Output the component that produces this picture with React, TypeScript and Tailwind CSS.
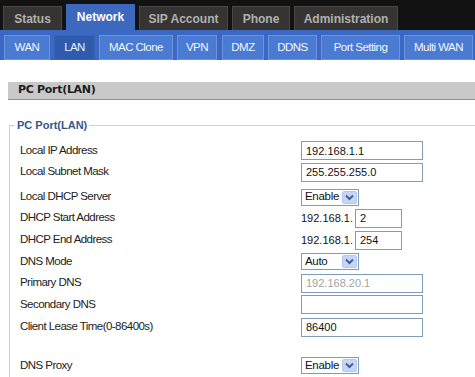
import React from 'react';

const mainTabs = [
  { label: 'Status', ml: 'ml-[3px]', w: 'w-[59px]' },
  { label: 'Network', ml: 'ml-[4px]', w: 'w-[69px]', active: true },
  { label: 'SIP Account', ml: 'ml-[4px]', w: 'w-[89px]' },
  { label: 'Phone', ml: 'ml-[4px]', w: 'w-[58px]' },
  { label: 'Administration', ml: 'ml-[4px]', w: 'w-[104px]' },
];

const subTabs = [
  { label: 'WAN', ml: 'ml-[4px]', w: 'w-[46px]' },
  { label: 'LAN', ml: 'ml-[4px]', w: 'w-[41px]', active: true },
  { label: 'MAC Clone', ml: 'ml-[4px]', w: 'w-[74px]' },
  { label: 'VPN', ml: 'ml-[4px]', w: 'w-[40px]' },
  { label: 'DMZ', ml: 'ml-[5px]', w: 'w-[42px]' },
  { label: 'DDNS', ml: 'ml-[4px]', w: 'w-[49px]' },
  { label: 'Port Setting', ml: 'ml-[4px]', w: 'w-[79px]' },
  { label: 'Multi WAN', ml: 'ml-[4px]', w: 'w-[69px]' },
];

function TextBox({ value, width = 'w-[122px]', disabled }: { value: string; width?: string; disabled?: boolean }) {
  return (
    <input
      readOnly
      value={value}
      className={`${width} h-[19px] border border-[#7f9db9] bg-white pl-[4px] text-[11px] font-['Liberation_Sans',sans-serif] outline-none ${
        disabled ? 'text-[#a3a3a3]' : 'text-[#111]'
      }`}
    />
  );
}

function Dropdown({ value }: { value: string }) {
  return (
    <div className="w-[58px] h-[17px] border border-[#7f9db9] bg-white flex items-center justify-between pl-[3px] pr-[1px]">
      <span className="text-[11.5px] tracking-[-0.3px] text-[#111]">{value}</span>
      <span className="w-[15px] h-[13px] rounded-[2px] border border-[#b5c8f2] bg-[#c5d6fa] flex items-center justify-center">
        <svg width="9" height="7" viewBox="0 0 9 7">
          <path d="M1 1.5 L4.5 5 L8 1.5" fill="none" stroke="#4a5f8c" strokeWidth="2" />
        </svg>
      </span>
    </div>
  );
}

function Row({ label, h, children }: { label: string; h: string; children: React.ReactNode }) {
  return (
    <div className={`flex items-center ${h}`}>
      <div className="w-[281px] text-[11.5px] tracking-[-0.55px] text-[#222]">{label}</div>
      {children}
    </div>
  );
}

export default function App() {
  return (
    <div className="w-[475px] h-[377px] overflow-hidden bg-white font-['Liberation_Sans',sans-serif]">
      <div className="h-[30px] bg-[#121212] flex items-end">
        {mainTabs.map((t) => (
          <div
            key={t.label}
            className={`${t.ml} ${t.w} flex items-center justify-center text-[12px] font-bold ${
              t.active
                ? 'h-[26px] bg-[#3d68bd] text-white'
                : 'h-[24px] bg-[#363432] border-t border-l border-r border-[#4a4846] text-[#b0b0b0]'
            }`}
          >
            {t.label}
          </div>
        ))}
      </div>

      <div className="h-[30px] bg-[#3b68c2] flex items-end">
        {subTabs.map((t) => (
          <div
            key={t.label}
            className={`${t.ml} ${t.w} h-[25px] flex items-center justify-center text-[11.5px] tracking-[-0.55px] border ${
              t.active
                ? 'bg-[#2f5bae] border-[#3863b6] text-[#e8eeff]'
                : 'bg-[#4a7ad2] border-[#6c93dd] text-[#f2f6ff]'
            }`}
          >
            {t.label}
          </div>
        ))}
      </div>

      <div className="mt-[22px] ml-[8px] h-[18px] bg-[#c9c9c9] border-b border-[#8f8f8f] flex items-center pl-[10px]">
        <span className="text-[11px] font-bold tracking-[-0.3px] text-[#1c1c1c] font-['DejaVu_Sans',sans-serif]">
          PC Port(LAN)
        </span>
      </div>

      <fieldset className="mt-[17px] ml-[9px] border-t border-l border-[#cfcfcf] pl-[10px] pt-[6px]">
        <legend className="-ml-[5px] px-[2px] text-[11px] font-bold text-[#35578f]">PC Port(LAN)</legend>
        <Row label="Local IP Address" h="h-[22px]">
          <TextBox value="192.168.1.1" />
        </Row>
        <Row label="Local Subnet Mask" h="h-[21px]">
          <TextBox value="255.255.255.0" />
        </Row>
        <div className="h-[4px]" />
        <Row label="Local DHCP Server" h="h-[21px]">
          <Dropdown value="Enable" />
        </Row>
        <Row label="DHCP Start Address" h="h-[21px]">
          <span className="text-[11px] text-[#111] w-[54px]">192.168.1.</span>
          <TextBox value="2" width="w-[47px]" />
        </Row>
        <Row label="DHCP End Address" h="h-[23px]">
          <span className="text-[11px] text-[#111] w-[54px]">192.168.1.</span>
          <TextBox value="254" width="w-[47px]" />
        </Row>
        <Row label="DNS Mode" h="h-[20px]">
          <Dropdown value="Auto" />
        </Row>
        <Row label="Primary DNS" h="h-[23px]">
          <TextBox value="192.168.20.1" disabled />
        </Row>
        <Row label="Secondary DNS" h="h-[20px]">
          <TextBox value="" />
        </Row>
        <Row label="Client Lease Time(0-86400s)" h="h-[25px]">
          <TextBox value="86400" />
        </Row>
        <div className="h-[15px]" />
        <Row label="DNS Proxy" h="h-[22px]">
          <Dropdown value="Enable" />
        </Row>
        <div className="h-[10px]" />
      </fieldset>
    </div>
  );
}
